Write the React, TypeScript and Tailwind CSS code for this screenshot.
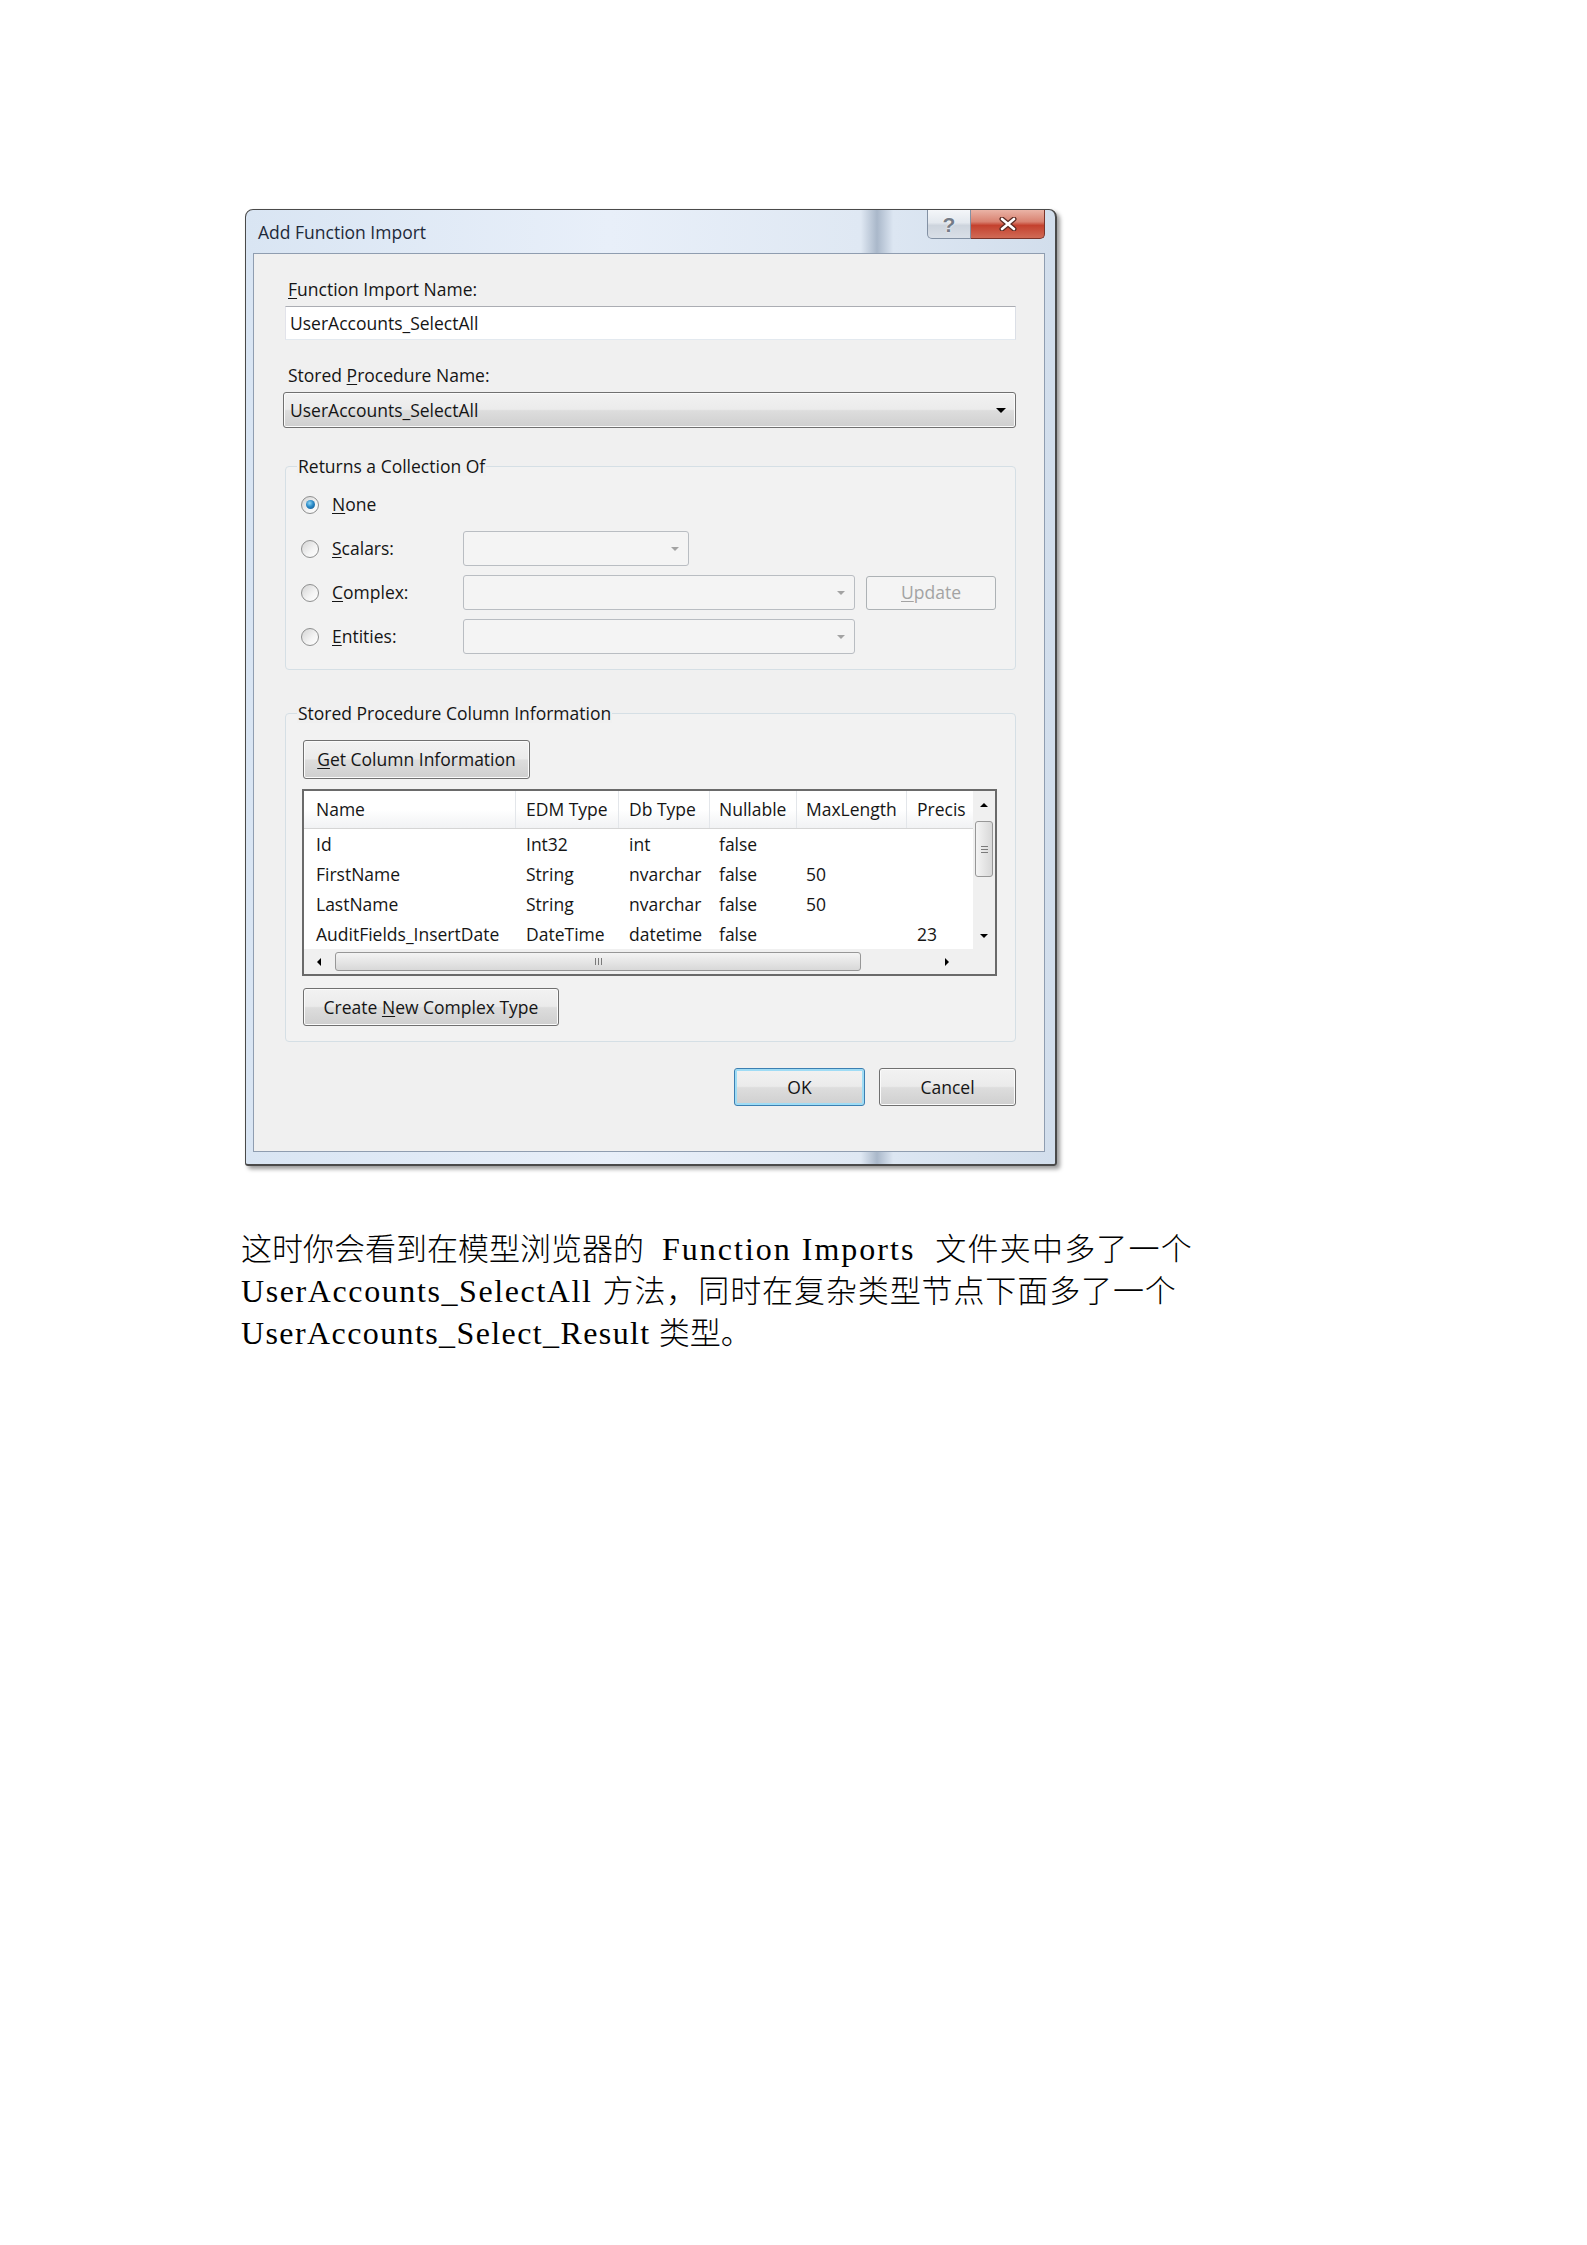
import React from 'react';

const btn =
  'flex items-center justify-center rounded-[3px] border border-[#707070] bg-[linear-gradient(180deg,#f2f2f2_0%,#ebebeb_48%,#dddddd_52%,#cfcfcf_100%)] shadow-[inset_0_0_0_1px_#fbfbfb] text-[#151515]';

const Tri = ({ color = '#000', dir = 'down' }: { color?: string; dir?: 'down' | 'up' | 'left' | 'right' }) => {
  const d = {
    down: 'M0 0h8L4 4z',
    up: 'M0 4h8L4 0z',
    left: 'M4 0v8L0 4z',
    right: 'M0 0v8l4-4z',
  }[dir];
  const vert = dir === 'down' || dir === 'up';
  return (
    <svg width={vert ? 8 : 4} height={vert ? 4 : 8} viewBox={vert ? '0 0 8 4' : '0 0 4 8'}>
      <path d={d} fill={color} />
    </svg>
  );
};

const Radio = ({ checked }: { checked?: boolean }) => (
  <div className="flex h-[18px] w-[18px] shrink-0 items-center justify-center rounded-full border border-[#8e8f8f] bg-[linear-gradient(135deg,#d4d4d4_0%,#f4f4f4_60%,#ffffff_100%)]">
    {checked && (
      <div className="h-[9px] w-[9px] rounded-full bg-[radial-gradient(circle_at_40%_35%,#8fd6f5_0%,#2b8ac7_45%,#0d4f86_100%)]" />
    )}
  </div>
);

const DisabledCombo = ({ w }: { w: string }) => (
  <div className={`${w} flex h-[35px] items-center justify-end rounded-[3px] border border-[#b9bdc2] bg-[#f4f4f4] pr-[9px]`}>
    <Tri color="#a3a3a3" />
  </div>
);

const cols = [
  { title: 'Name', w: 'w-[212px] pl-[12px]' },
  { title: 'EDM Type', w: 'w-[103px] pl-[10px]' },
  { title: 'Db Type', w: 'w-[91px] pl-[10px]' },
  { title: 'Nullable', w: 'w-[87px] pl-[9px]' },
  { title: 'MaxLength', w: 'w-[110px] pl-[9px]' },
  { title: 'Precis', w: 'w-[66px] pl-[10px]' },
];

const rows = [
  ['Id', 'Int32', 'int', 'false', '', ''],
  ['FirstName', 'String', 'nvarchar', 'false', '50', ''],
  ['LastName', 'String', 'nvarchar', 'false', '50', ''],
  ['AuditFields_InsertDate', 'DateTime', 'datetime', 'false', '', '23'],
];

const Grid = () => (
  <div className="ml-[16px] mt-[10px] flex h-[187px] w-[695px] flex-col border-2 border-[#6a6a6a] bg-white">
    <div className="flex h-[158px]">
      <div className="flex w-[669px] flex-col overflow-hidden">
        {/* header */}
        <div className="flex h-[38px] shrink-0 border-b border-[#d5d5d5] bg-[linear-gradient(180deg,#ffffff_0%,#ffffff_50%,#f1f2f4_100%)]">
          {cols.map((c, i) => (
            <div
              key={c.title}
              className={`${c.w} flex shrink-0 items-center overflow-hidden whitespace-nowrap ${i < cols.length - 1 ? 'border-r border-[#e3e6ea]' : ''}`}
            >
              {c.title}
            </div>
          ))}
        </div>
        <div className="h-[120px] overflow-hidden">
          {rows.map((r) => (
            <div key={r[0]} className="flex h-[30px] items-center">
              {r.map((v, i) => (
                <div key={i} className={`${cols[i].w} shrink-0 whitespace-nowrap`}>
                  {v}
                </div>
              ))}
            </div>
          ))}
        </div>
      </div>
      {/* vertical scrollbar */}
      <div className="flex w-[22px] flex-col bg-[#f0f0f0]">
        <div className="flex h-[27px] items-center justify-center">
          <Tri dir="up" />
        </div>
        <div className="mx-[2px] mt-[3px] flex h-[56px] flex-col items-center justify-center gap-[2px] rounded-[3px] border border-[#979797] bg-[linear-gradient(90deg,#f4f4f4_0%,#e6e6e6_50%,#d8d8d8_100%)]">
          <div className="h-px w-[7px] bg-[#7a7a7a]" />
          <div className="h-px w-[7px] bg-[#7a7a7a]" />
          <div className="h-px w-[7px] bg-[#7a7a7a]" />
        </div>
        <div className="flex-1" />
        <div className="flex h-[27px] items-center justify-center">
          <Tri dir="down" />
        </div>
      </div>
    </div>
    {/* horizontal scrollbar */}
    <div className="flex h-[25px]">
      <div className="flex w-[669px] items-center bg-[#f0f0f0]">
        <div className="flex w-[30px] justify-center">
          <Tri dir="left" />
        </div>
        <div className="ml-px flex h-[19px] w-[526px] items-center justify-center gap-[2px] rounded-[3px] border border-[#979797] bg-[linear-gradient(180deg,#f4f4f4_0%,#e6e6e6_50%,#d8d8d8_100%)]">
          <div className="h-[7px] w-px bg-[#7a7a7a]" />
          <div className="h-[7px] w-px bg-[#7a7a7a]" />
          <div className="h-[7px] w-px bg-[#7a7a7a]" />
        </div>
        <div className="flex flex-1 justify-center pl-[60px]">
          <Tri dir="right" />
        </div>
      </div>
      <div className="w-[22px] bg-[#f0f0f0]" />
    </div>
  </div>
);

const GroupBox = ({ title, className, children }: { title: string; className: string; children: React.ReactNode }) => (
  <div className={`relative rounded-[4px] border border-[#d5dfe5] bg-[#f2f2f2] ${className}`}>
    <span className="absolute -top-[11px] left-[11px] bg-[#f0f0f0] px-px leading-[20px]">{title}</span>
    {children}
  </div>
);

const latin = "font-['Liberation_Serif','Noto_Sans_CJK_SC',serif] text-[32px] font-normal leading-[30px]";

export default function App() {
  return (
    <div className="min-h-[2245px] bg-white pb-[200px] pt-[209px]">
      {/* dialog */}
      <div className="ml-[245px] flex h-[957px] w-[812px] flex-col rounded-b-[3px] rounded-t-[8px] border border-b-2 border-r-2 border-[#4a4a4a] bg-[linear-gradient(90deg,#d9e5f3_0%,#e8eff9_45%,#dfe8f3_76%,#aab8ca_78%,#dce6f2_80%,#d2deec_100%)] font-['Open_Sans',sans-serif] text-[17.5px] text-[#151515] shadow-[3px_3px_4px_rgba(0,0,0,0.4)]">
        {/* title bar */}
        <div className="flex h-[43px] items-start justify-between">
          <span className="ml-[12px] mt-[11px] leading-[22px] text-[#1e2a3a]">Add Function Import</span>
          <div className="mr-[10px] flex">
            <div className="flex h-[29px] w-[44px] items-center justify-center rounded-bl-[5px] border border-t-0 border-[#8391a4] bg-[linear-gradient(180deg,#f4f6f9_0%,#e3e8ee_45%,#cdd4dd_55%,#d9dfe7_100%)] font-['Liberation_Sans',sans-serif] text-[21px] font-bold leading-none text-[#757c87] [text-shadow:0_0_2px_#fff]">
              ?
            </div>
            <div className="flex h-[29px] w-[74px] items-center justify-center rounded-br-[5px] border border-l-0 border-t-0 border-[#7a3329] bg-[linear-gradient(180deg,#eab3a6_0%,#d98271_42%,#c4412e_55%,#d06a55_100%)]">
              <svg width="18" height="14" viewBox="0 0 18 14">
                <path d="M3 2l12 10M15 2L3 12" stroke="#5b2a22" strokeWidth="5" strokeLinecap="round" />
                <path d="M3 2l12 10M15 2L3 12" stroke="#ffffff" strokeWidth="2.6" strokeLinecap="round" />
              </svg>
            </div>
          </div>
        </div>

        {/* client area */}
        <div className="ml-[7px] mr-[10px] flex h-[899px] flex-col border border-[#8f9db0] bg-[#f0f0f0] pl-[31px] pr-[28px] pt-[25px]">
          <div className="ml-[3px] leading-[20px]">
            <u className="underline-offset-2">F</u>unction Import Name:
          </div>
          <div className="mt-[7px] flex h-[34px] items-center border border-[#abadb3] border-b-[#e3e9ef] border-l-[#e2e3ea] border-r-[#dbdfe6] bg-white pl-[4px]">
            UserAccounts_SelectAll
          </div>
          <div className="ml-[3px] mt-[25px] leading-[20px]">
            Stored <u className="underline-offset-2">P</u>rocedure Name:
          </div>
          <div className={`${btn} -ml-[2px] mt-[7px] h-[36px] w-[733px] !justify-between pl-[6px] pr-[9px]`}>
            <span>UserAccounts_SelectAll</span>
            <svg width="10" height="5" viewBox="0 0 10 5">
              <path d="M0 0h10L5 5z" fill="#000" />
            </svg>
          </div>

          <GroupBox title="Returns a Collection Of" className="mt-[38px] h-[204px] pt-[20px]">
            <div className="flex flex-col gap-[9px]">
              {[
                { k: 'N', rest: 'one', checked: true, combo: null as string | null },
                { k: 'S', rest: 'calars:', combo: 'w-[226px]' },
                { k: 'C', rest: 'omplex:', combo: 'w-[392px]', update: true },
                { k: 'E', rest: 'ntities:', combo: 'w-[392px]' },
              ].map((r) => (
                <div key={r.k} className="flex h-[35px] items-center">
                  <div className="ml-[15px]">
                    <Radio checked={r.checked} />
                  </div>
                  <div className="ml-[13px] w-[131px] shrink-0">
                    <u className="underline-offset-2">{r.k}</u>
                    {r.rest}
                  </div>
                  {r.combo && <DisabledCombo w={r.combo} />}
                  {r.update && (
                    <div className="ml-[11px] flex h-[34px] w-[130px] items-center justify-center rounded-[3px] border border-[#adb2b5] bg-[#f4f4f4] text-[#a3a3a3]">
                      <u className="underline-offset-2">U</u>pdate
                    </div>
                  )}
                </div>
              ))}
            </div>
          </GroupBox>

          <GroupBox title="Stored Procedure Column Information" className="mt-[43px] h-[329px] pt-[26px]">
            <div className={`${btn} ml-[17px] h-[39px] w-[227px]`}>
              <span>
                <u className="underline-offset-2">G</u>et Column Information
              </span>
            </div>
            <Grid />
            <div className={`${btn} ml-[17px] mt-[12px] h-[38px] w-[256px]`}>
              <span>
                Create <u className="underline-offset-2">N</u>ew Complex Type
              </span>
            </div>
          </GroupBox>

          <div className="mt-[26px] flex justify-end gap-[14px]">
            <div className={`${btn} h-[38px] w-[131px] !border-[#3c7fb1] !shadow-[inset_0_0_0_2px_#9fdcf5]`}>OK</div>
            <div className={`${btn} h-[38px] w-[137px]`}>Cancel</div>
          </div>
        </div>
      </div>

      {/* paragraph */}
      <p className="ml-[241px] mt-[60px] whitespace-nowrap font-['Noto_Sans_CJK_SC',sans-serif] text-[31px] font-light leading-[42px] text-black">
        这时你会看到在模型浏览器的
        <span className="inline-block w-[18px]" />
        <span className={`${latin} tracking-[2px]`}>Function Imports</span>
        <span className="inline-block w-[20px]" />
        <span className="tracking-[1.2px]">文件夹中多了一个</span>
        <br />
        <span className={`${latin} tracking-[1.6px]`}>UserAccounts_SelectAll</span>
        <span className="inline-block w-[10px]" />
        <span className="tracking-[0.9px]">方法，同时在复杂类型节点下面多了一个</span>
        <br />
        <span className={`${latin} tracking-[1.4px]`}>UserAccounts_Select_Result</span>
        <span className="inline-block w-[8px]" />
        类型。
      </p>
    </div>
  );
}
